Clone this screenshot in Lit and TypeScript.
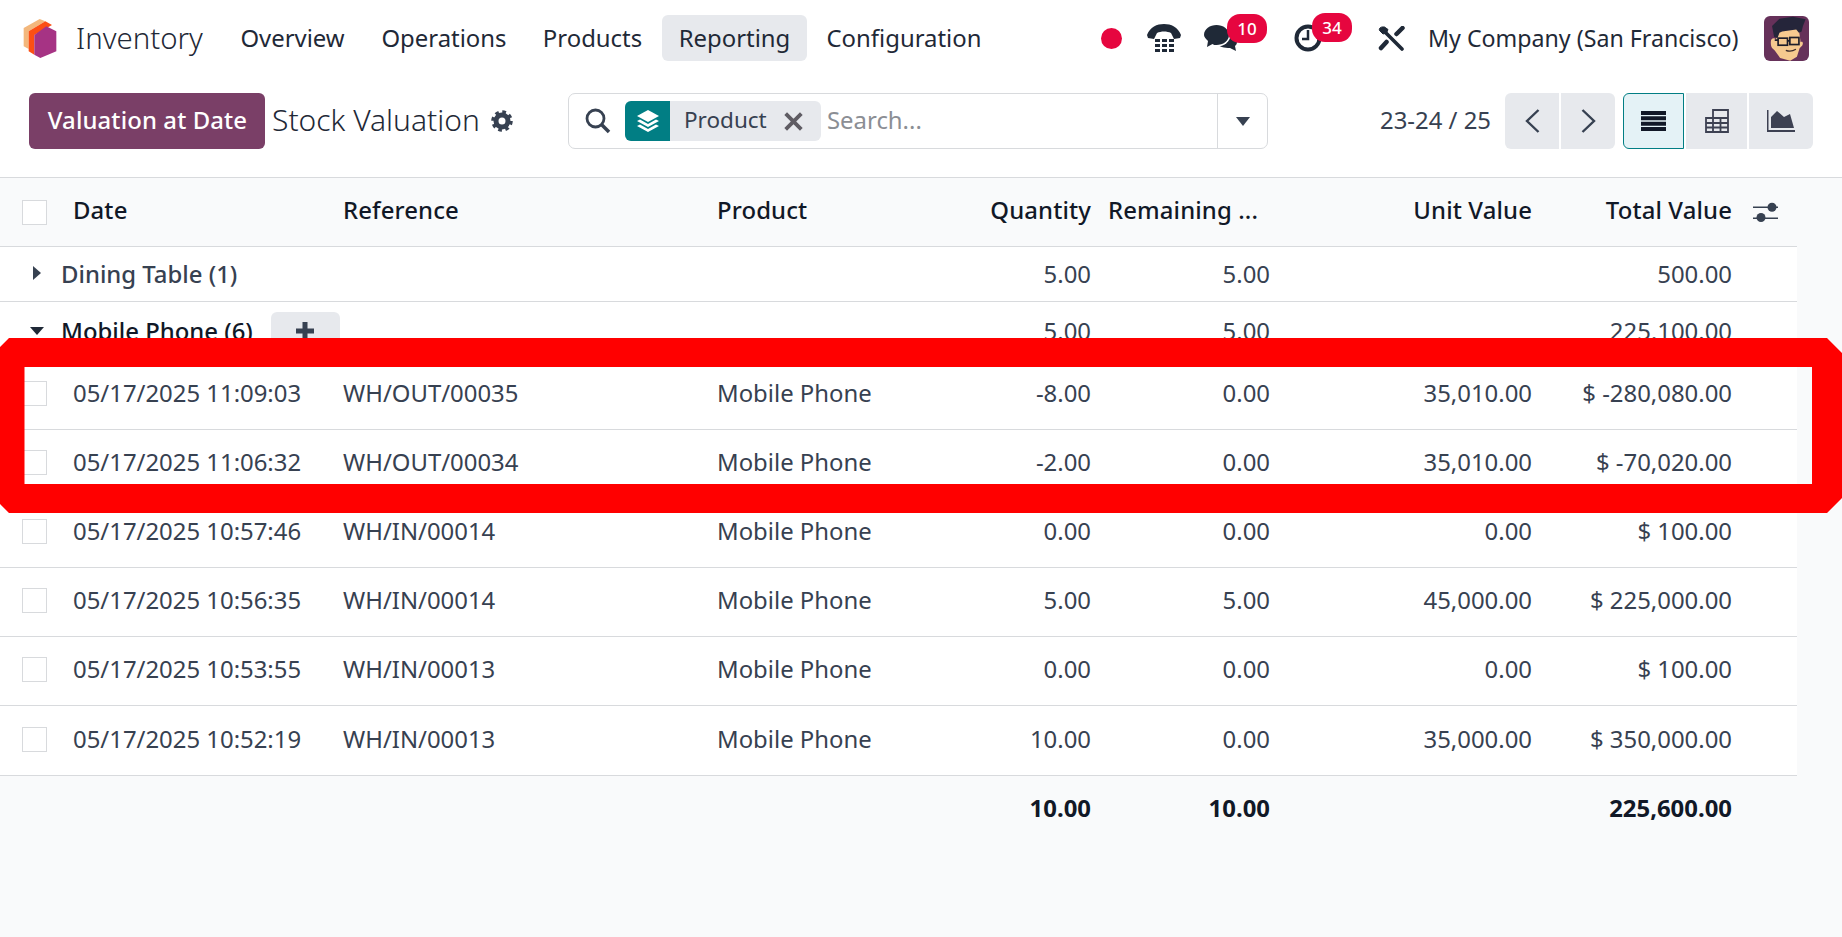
import { LitElement, html, css } from "lit";
import { customElement } from "lit/decorators.js";

const rows = [
  ["05/17/2025 11:09:03", "WH/OUT/00035", "-8.00", "0.00", "35,010.00", "$ -280,080.00"],
  ["05/17/2025 11:06:32", "WH/OUT/00034", "-2.00", "0.00", "35,010.00", "$ -70,020.00"],
  ["05/17/2025 10:57:46", "WH/IN/00014", "0.00", "0.00", "0.00", "$ 100.00"],
  ["05/17/2025 10:56:35", "WH/IN/00014", "5.00", "5.00", "45,000.00", "$ 225,000.00"],
  ["05/17/2025 10:53:55", "WH/IN/00013", "0.00", "0.00", "0.00", "$ 100.00"],
  ["05/17/2025 10:52:19", "WH/IN/00013", "10.00", "0.00", "35,000.00", "$ 350,000.00"],
];

@customElement("app-root")
export class AppRoot extends LitElement {
  static styles = css`
    :host {
      display: block;
      position: relative;
      width: 1842px;
      height: 937px;
      overflow: hidden;
      background: #f9fafb;
      font-family: "Noto Sans", sans-serif;
      font-size: 23.9px;
      color: #374151;
    }
    svg { display: block; flex: none; }
    .top { background: #fff; }
    .nav { display: flex; align-items: center; height: 76px; }
    .logo { margin-left: 23px; }
    .brand { margin-left: 19px; width: 127px; font-size: 29.4px; font-weight: 300; white-space: nowrap; color: #1f2937; }
    .menu { margin-left: 20px; display: grid; grid-template-columns: 139px 158px 133px 145px 188px; column-gap: 3px; }
    .mi { height: 46px; box-sizing: border-box; padding-bottom: 2px; display: flex; align-items: center; justify-content: center; border-radius: 6px; white-space: nowrap; color: #1f2937; }
    .mi.on { background: #e7e9ed; }
    .tray { margin-left: auto; margin-right: 33px; display: flex; align-items: center; }
    .dot { width: 21px; height: 21px; border-radius: 50%; background: #e6063f; }
    .ti { position: relative; }
    .phone { margin-left: 25px; }
    .chat { margin-left: 23px; }
    .clock { margin-left: 56px; }
    .tools { margin-left: 56px; }
    .badge {
      position: absolute; top: -11px; height: 29px; width: 40px; border-radius: 13px;
      background: #e6063f; color: #fff; font-size: 17px; font-weight: 500;
      display: flex; align-items: center; justify-content: center;
    }
    .chat .badge { left: 23px; }
    .clock .badge { left: 18px; }
    .company { margin-left: 23px; width: 336px; white-space: nowrap; color: #1f2937; font-size: 23.2px; }
    .ctl { display: flex; align-items: stretch; height: 56px; padding: 17px 0 28px; border-bottom: 1px solid #d8dadd; }
    .new {
      margin-left: 29px; width: 236px; border-radius: 6px; background: #7a3f67; color: #fff; letter-spacing: 0.12px;
      font-weight: 500; display: flex; align-items: center; justify-content: center; white-space: nowrap; padding: 0 0 4px 1px; box-sizing: border-box;
    }
    .title { margin-left: 7px; width: 219px; font-size: 30px; font-weight: 300; color: #1f2937; white-space: nowrap; align-self: center; padding-bottom: 4px; }
    .gear { align-self: center; }
    .search {
      margin-left: 55px; width: 700px; box-sizing: border-box; border: 1px solid #d8dadd; border-radius: 7px;
      display: flex; align-items: center; position: relative;
    }
    .sicon { margin-left: 16px; }
    .facet { margin-left: 14px; height: 40px; width: 196px; flex: none; display: flex; align-items: center; background: #e7e9ed; border-radius: 6px; overflow: hidden; }
    .fi { width: 45px; height: 40px; background: #017e84; display: flex; align-items: center; justify-content: center; flex: none; }
    .fl { margin-left: 14px; width: 100px; flex: none; white-space: nowrap; font-size: 22.5px; padding-bottom: 3px; }
    .x { width: 19px; height: 19px; }
    .ph { margin-left: 6px; color: #8b8e94; flex: 1; padding-bottom: 3px; }
    .dd { width: 49px; height: 100%; border-left: 1px solid #d8dadd; display: flex; align-items: center; justify-content: center; flex: none; }
    .pager { margin-left: 112px; width: 125px; align-self: center; white-space: nowrap; padding-bottom: 3px; }
    .pb { display: flex; gap: 2px; }
    .pb div { width: 54px; background: #e7e9ed; display: flex; align-items: center; justify-content: center; }
    .pb div:first-child { border-radius: 6px 0 0 6px; }
    .pb div:last-child { border-radius: 0 6px 6px 0; }
    .vb { margin-left: 8px; display: flex; gap: 2px; }
    .vb div { width: 61px; background: #e7e9ed; display: flex; align-items: center; justify-content: center; box-sizing: border-box; }
    .vb div:first-child { border-radius: 6px 0 0 6px; background: #e4f2f6; border: 1px solid #017e84; }
    .vb div:last-child { border-radius: 0 6px 6px 0; width: 64px; }

    .table { width: 1797px; }
    .g {
      display: grid;
      grid-template-columns: 61px 270px 374px 250px 148px 179px 262px 200px 53px;
      align-items: center; box-sizing: border-box; border-bottom: 1px solid #d8dadd;
    }
    .g > * { white-space: nowrap; }
    .r { text-align: right; padding-right: 12px; }
    .l { padding-left: 12px; }
    .cb { margin-left: 22px; width: 25px; height: 25px; box-sizing: border-box; border: 1px solid #d8dadd; background: #fff; }
    .head { height: 69px; background: #f9fafb; font-weight: 500; color: #111827; letter-spacing: 0.12px; }
    .head .l, .head .r, .head .rem { padding-bottom: 5px; }
    .head .rem { padding-left: 5px; }
    .opt { padding-left: 9px; }
    .gr { background: #fff; color: #374151; font-weight: 500; padding-bottom: 2px; }
    .gr .v { font-weight: 400; }
    .gr.a { height: 55px; }
    .gr.b { height: 58.5px; padding-bottom: 0; }
    .gn { grid-column: 1 / span 4; display: flex; align-items: center; }
    .gn svg { margin-left: 30px; width: 14px; }
    .gn span { margin-left: 17px; }
    .b .gn span { color: #111827; }
    .add { margin-left: 18px; width: 69px; height: 38px; background: #e7e9ed; border-radius: 6px; display: flex; align-items: center; justify-content: center; }
    .add svg { margin: 0; width: 20px; }
    .row { height: 69.2px; background: #fff; padding-bottom: 5px; }
    .row .cb { margin-top: 2px; }
    .foot { height: 66px; font-weight: 700; color: #111827; border: 0; padding-bottom: 3px; }
    .mark { position: absolute; left: 0; top: 0; pointer-events: none; }
  `;

  render() {
    return html`
      <div class="top">
        <div class="nav">
          <svg class="logo" width="34" height="39" viewBox="40 28 98 117">
            <path fill="#f3b77c" d="M40 55 88 28l17 7-50 30v53l-15-8z"/>
            <path fill="#fc4f14" d="M55 65 105 35l20 11-53 30v59l-17-10z"/>
            <path fill="#a63384" d="M72 76l36-26 30 15v60l-48 20-18-10z"/>
          </svg>
          <div class="brand">Inventory</div>
          <div class="menu">
            <div class="mi">Overview</div>
            <div class="mi">Operations</div>
            <div class="mi">Products</div>
            <div class="mi on">Reporting</div>
            <div class="mi">Configuration</div>
          </div>
          <div class="tray">
            <div class="dot"></div>
            <div class="ti phone">
              <svg width="34" height="28" viewBox="0 0 34 28" fill="#1f2937">
                <path d="M0 11C3 3 10 0 17 0s14 3 17 11l-1 3-6 1-3-6c-4-2-10-2-14 0l-3 6-6-1z"/>
                <path d="M8 15h5v3H8zM15 15h5v3h-5zM22 15h5v3h-5zM8 20h5v3H8zM15 20h5v3h-5zM22 20h5v3h-5zM8 25h5v3H8zM15 25h5v3h-5zM22 25h5v3h-5z"/>
              </svg>
            </div>
            <div class="ti chat">
              <svg width="34" height="26" viewBox="0 0 34 26" fill="#1f2937">
                <path d="M22 10c6 0 11 3 11 7 0 2-1 3-2 4l1 5-6-3c-5 0-12-1-14-5z"/>
                <ellipse cx="12.5" cy="10" rx="14" ry="11.5" fill="#fff"/>
                <path d="M12.5 0C19 0 25 4 25 10s-6 10-12.500 10c-1.500 0-3 0-4-1L3 22l1-6C2 14 0 12 0 10 0 4 6 0 12.500 0z"/>
              </svg>
              <div class="badge">10</div>
            </div>
            <div class="ti clock">
              <svg width="28" height="28" viewBox="0 0 28 28" fill="none" stroke="#1f2937">
                <circle cx="14" cy="14" r="11.500" stroke-width="4"/>
                <path d="M14 6v9H8" stroke-width="2.500"/>
              </svg>
              <div class="badge">34</div>
            </div>
            <div class="ti tools">
              <svg width="27" height="25" viewBox="0 0 27 25" fill="none" stroke="#1f2937">
                <path d="M8 7 24 23" stroke-width="3.600" stroke-linecap="round"/>
                <path d="M1.500 4.500 5 8l3.500-1L10 3.500 6.500 1C4 .5 .5 1.500 1.500 4.500z" fill="#1f2937" stroke-width="1"/>
                <path d="M24.500 2 18.500 8M8.500 16 3 22" stroke-width="4.500" stroke-linecap="round"/>
              </svg>
            </div>
            <div class="company">My Company (San Francisco)</div>
            <svg width="45" height="45" viewBox="28 18 134 134">
              <rect x="28" y="18" width="134" height="134" rx="18" fill="#66315a"/>
              <path fill="#f6c98f" d="M48 88c4-5 10-4 14 0l2-28 65-8 6 44c6-4 9 2 5 10l-8 8-8 25-20 12-30-8-16-22-8-8c-4-3-5-20-2-25z" transform="translate(2 0)"/>
              <path fill="#25253a" d="M52 48l22-22 40-6 38 8-8 20-4 16-8 4-8-10-42 6-8 4-6 16-10-4z"/>
              <g fill="none" stroke="#1d1d2b" stroke-width="5">
                <rect x="70" y="84" width="28" height="21"/>
                <rect x="105" y="82" width="27" height="21"/>
                <path d="M98 92h7M60 90h10"/>
              </g>
              <path d="M93 120c10 4 20 3 30-3" fill="none" stroke="#3a2a2a" stroke-width="4"/>
            </svg>
          </div>
        </div>
        <div class="ctl">
          <div class="new">Valuation at Date</div>
          <div class="title">Stock Valuation</div>
          <svg class="gear" width="22" height="22" viewBox="0 0 22 22" fill="none" stroke="#374151">
            <circle cx="11" cy="11" r="6" stroke-width="5"/>
            <circle cx="11" cy="11" r="9" stroke-width="3.500" stroke-dasharray="3.600 3.470"/>
          </svg>
          <div class="search">
            <svg class="sicon" width="26" height="26" viewBox="0 0 26 26" fill="none" stroke="#374151" stroke-width="2.800">
              <circle cx="10.500" cy="10.500" r="8.500"/><path d="M16.500 16.500 24 24" stroke-width="3.500"/>
            </svg>
            <div class="facet">
              <div class="fi">
                <svg width="24" height="24" viewBox="0 0 24 24" fill="#fff">
                  <path d="M12 1 23 7l-11 6L1 7z"/>
                  <path d="M4 10.500 12 15l8-4.500 3 1.500-11 6L1 12zM4 15.500 12 20l8-4.500 3 1.500-11 6L1 17z"/>
                </svg>
              </div>
              <div class="fl">Product</div>
              <svg class="x" viewBox="0 0 17 17" stroke="#5f5c63" stroke-width="3.400"><path d="M1.500 1.500l14 14M15.500 1.500l-14 14"/></svg>
            </div>
            <div class="ph">Search...</div>
            <div class="dd">
              <svg width="14" height="9" viewBox="0 0 14 9" fill="#374151"><path d="M0 0h14L7 9z"/></svg>
            </div>
          </div>
          <div class="pager">23-24 / 25</div>
          <div class="pb">
            <div><svg width="15" height="24" viewBox="0 0 15 24" fill="none" stroke="#374151" stroke-width="2.400"><path d="M13.500 1 2 12l11.500 11"/></svg></div>
            <div><svg width="15" height="24" viewBox="0 0 15 24" fill="none" stroke="#374151" stroke-width="2.400"><path d="M1.500 1 13 12 1.500 23"/></svg></div>
          </div>
          <div class="vb">
            <div><svg width="25" height="20" viewBox="0 0 25 20" fill="#111827"><path d="M0 0h25v4H0zM0 5.300h25v4H0zM0 10.700h25v4H0zM0 16h25v4H0z"/></svg></div>
            <div><svg width="24" height="24" viewBox="0 0 24 24" fill="none" stroke="#3d4152" stroke-width="1.800"><path d="M8 9V1h15v22H1V9h22M1 14h22M1 18.500h22M8 9v14M15.500 9v14"/></svg></div>
            <div><svg width="28" height="22" viewBox="0 0 28 22" fill="#3d4152"><path d="M0 0h1.500v20H28v2H0z"/><path d="M4 18V7l6-6 7 6 6-3 4 14z"/></svg></div>
          </div>
        </div>
      </div>
      <div class="table">
        <div class="g head">
          <div class="cb"></div>
          <div class="l">Date</div>
          <div class="l">Reference</div>
          <div class="l">Product</div>
          <div class="r">Quantity</div>
          <div class="rem">Remaining ...</div>
          <div class="r">Unit Value</div>
          <div class="r">Total Value</div>
          <div class="opt">
            <svg width="25" height="20" viewBox="0 0 25 20" fill="#374151"><path d="M0 4.500h25v1.600H0zM0 15.500h25v1.600H0z"/><circle cx="19" cy="5.300" r="4.500"/><circle cx="8" cy="15.500" r="4.500"/></svg>
          </div>
        </div>
        <div class="g gr a">
          <div class="gn"><svg width="14" height="14" viewBox="0 0 14 14" fill="#374151"><path d="M3 0l8 7-8 7z"/></svg><span>Dining Table (1)</span></div>
          <div class="r v">5.00</div><div class="r v">5.00</div><div></div><div class="r v">500.00</div><div></div>
        </div>
        <div class="g gr b">
          <div class="gn"><svg width="14" height="14" viewBox="0 0 14 14" fill="#1f2937"><path d="M0 3h14l-7 8z"/></svg><span>Mobile Phone (6)</span>
            <div class="add"><svg width="20" height="20" viewBox="0 0 20 20" fill="#374151"><path d="M7.500 1h5v6.500H19v5h-6.500V19h-5v-6.500H1v-5h6.500z"/></svg></div></div>
          <div class="r v">5.00</div><div class="r v">5.00</div><div></div><div class="r v">225,100.00</div><div></div>
        </div>
        ${rows.map(
          (r) => html`<div class="g row">
            <div class="cb"></div>
            <div class="l">${r[0]}</div>
            <div class="l">${r[1]}</div>
            <div class="l">Mobile Phone</div>
            <div class="r">${r[2]}</div>
            <div class="r">${r[3]}</div>
            <div class="r">${r[4]}</div>
            <div class="r">${r[5]}</div>
          </div>`
        )}
        <div class="g foot">
          <div></div><div></div><div></div><div></div>
          <div class="r">10.00</div><div class="r">10.00</div><div></div><div class="r">225,600.00</div>
        </div>
      </div>
      <svg class="mark" width="1842" height="937" viewBox="0 0 1842 937">
        <path fill="#ff0000" fill-rule="evenodd" d="M9 338H1827L1842 353V498L1827 513H9L0 504V347ZM24.500 367V484H1812V367Z"/>
      </svg>
    `;
  }
}
